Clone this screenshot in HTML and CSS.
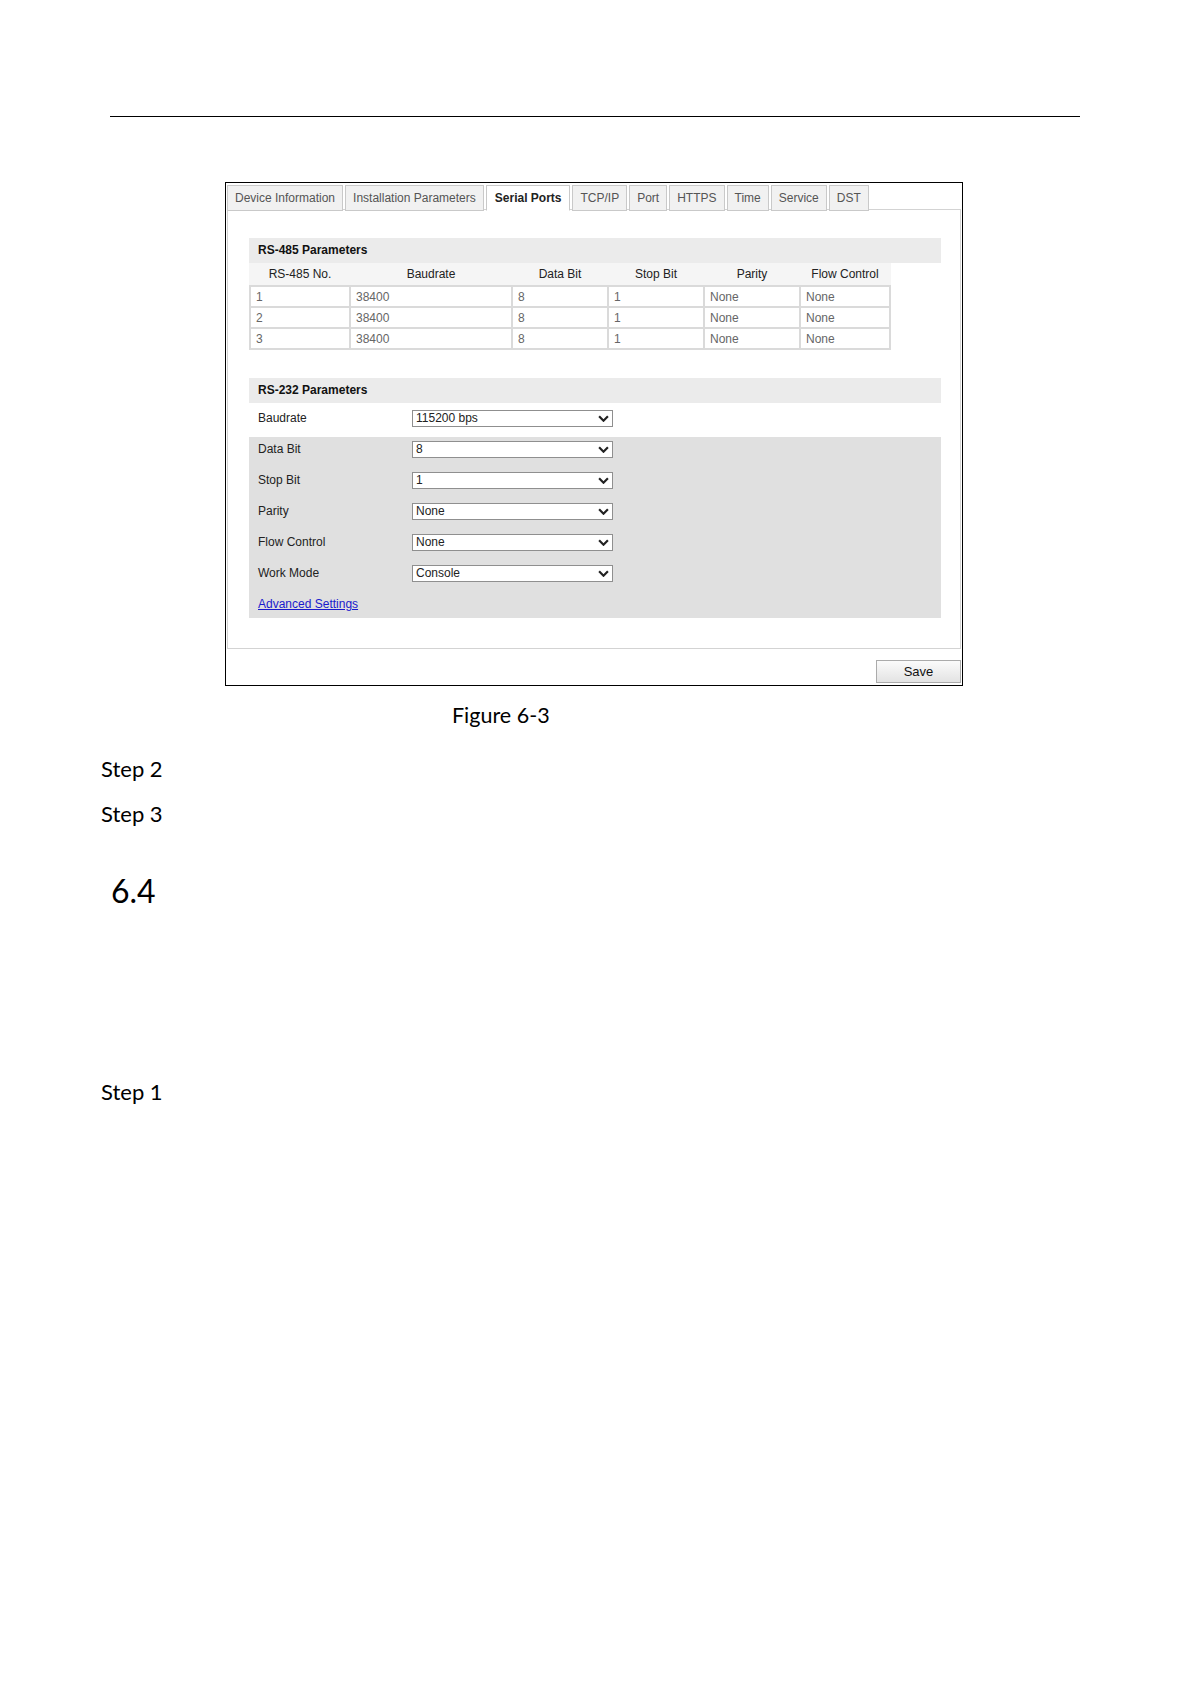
FILE: index.html
```html
<!DOCTYPE html>
<html>
<head>
<meta charset="utf-8">
<link rel="stylesheet" href="styles.css">
</head>
<body>
<div class="page">
  <div class="rule"></div>

  <div class="shot">
    <div class="tabs">
      <div class="tab">Device Information</div>
      <div class="tab">Installation Parameters</div>
      <div class="tab active">Serial Ports</div>
      <div class="tab">TCP/IP</div>
      <div class="tab">Port</div>
      <div class="tab">HTTPS</div>
      <div class="tab">Time</div>
      <div class="tab">Service</div>
      <div class="tab">DST</div>
    </div>
    <div class="panel">
      <div class="sec-head">RS-485 Parameters</div>
      <div class="grid485 head">
        <div>RS-485 No.</div><div>Baudrate</div><div>Data Bit</div><div>Stop Bit</div><div>Parity</div><div>Flow Control</div>
      </div>
      <div class="grid485 body">
        <div>1</div><div>38400</div><div>8</div><div>1</div><div>None</div><div>None</div>
        <div>2</div><div>38400</div><div>8</div><div>1</div><div>None</div><div>None</div>
        <div>3</div><div>38400</div><div>8</div><div>1</div><div>None</div><div>None</div>
      </div>

      <div class="sec-head sec232">RS-232 Parameters</div>
      <div class="row first">
        <div class="lbl">Baudrate</div>
        <div class="sel"><span>115200 bps</span><svg viewBox="0 0 10 6" class="chev"><path d="M1 1 L5 5 L9 1" fill="none" stroke="#222" stroke-width="2"/></svg></div>
      </div>
      <div class="grayblock">
        <div class="row">
          <div class="lbl">Data Bit</div>
          <div class="sel"><span>8</span><svg viewBox="0 0 10 6" class="chev"><path d="M1 1 L5 5 L9 1" fill="none" stroke="#222" stroke-width="2"/></svg></div>
        </div>
        <div class="row">
          <div class="lbl">Stop Bit</div>
          <div class="sel"><span>1</span><svg viewBox="0 0 10 6" class="chev"><path d="M1 1 L5 5 L9 1" fill="none" stroke="#222" stroke-width="2"/></svg></div>
        </div>
        <div class="row">
          <div class="lbl">Parity</div>
          <div class="sel"><span>None</span><svg viewBox="0 0 10 6" class="chev"><path d="M1 1 L5 5 L9 1" fill="none" stroke="#222" stroke-width="2"/></svg></div>
        </div>
        <div class="row">
          <div class="lbl">Flow Control</div>
          <div class="sel"><span>None</span><svg viewBox="0 0 10 6" class="chev"><path d="M1 1 L5 5 L9 1" fill="none" stroke="#222" stroke-width="2"/></svg></div>
        </div>
        <div class="row">
          <div class="lbl">Work Mode</div>
          <div class="sel"><span>Console</span><svg viewBox="0 0 10 6" class="chev"><path d="M1 1 L5 5 L9 1" fill="none" stroke="#222" stroke-width="2"/></svg></div>
        </div>
        <div class="adv"><a href="#">Advanced Settings</a></div>
      </div>
    </div>
    <div class="footer">
      <div class="btn">Save</div>
    </div>
  </div>

  <div class="caption">Figure 6-3</div>
  <div class="step s2">Step 2</div>
  <div class="step s3">Step 3</div>
  <div class="heading">6.4</div>
  <div class="step s1">Step 1</div>
</div>
</body>
</html>
```

FILE: styles.css
```css
html, body {
  margin: 0;
  padding: 0;
  background: #fff;
}
.page {
  width: 1190px;
  height: 1684px;
  position: relative;
  font-family: Lato, "Noto Sans", sans-serif;
  color: #000;
  padding-top: 116px;
  box-sizing: border-box;
}
.rule {
  margin-left: 110px;
  width: 970px;
  border-top: 1px solid #000;
}
.shot {
  margin-left: 225px;
  margin-top: 65px;
  width: 738px;
  box-sizing: border-box;
  border: 1px solid #000;
  padding: 2px 1px 0 1px;
  font-family: "Liberation Sans", Arial, sans-serif;
  font-size: 12px;
  color: #333;
}
.tabs {
  display: flex;
  gap: 2px;
  height: 25px;
  position: relative;
  z-index: 1;
  margin-bottom: -1px;
}
.tab {
  height: 26px;
  box-sizing: border-box;
  padding: 0 7px;
  line-height: 24px;
  border: 1px solid #c9c9c9;
  background: #f1f1f1;
  color: #555;
  white-space: nowrap;
}
.tab.active {
  background: #fff;
  border-bottom-color: #fff;
  font-weight: bold;
  color: #222;
  padding: 0 8px;
}
.panel {
  width: 734px;
  box-sizing: border-box;
  border: 1px solid #d3d3d3;
  padding: 28px 19px 30px 21px;
}
.sec-head {
  height: 25px;
  line-height: 25px;
  background: #ebebeb;
  padding-left: 9px;
  font-weight: bold;
  color: #111;
}
.sec232 {
  margin-top: 28px;
}
.grid485 {
  display: grid;
  grid-template-columns: 98px 160px 94px 94px 94px 88px;
  gap: 2px;
  width: 642px;
  box-sizing: border-box;
  padding: 0 2px;
}
.grid485.head {
  background: #f5f5f5;
  height: 22px;
  line-height: 23px;
  text-align: center;
  color: #222;
}
.grid485.body {
  background: #dadada;
  padding: 2px;
}
.grid485.body div {
  background: #fff;
  height: 19px;
  line-height: 20px;
  padding-left: 5px;
  color: #666;
}
.row {
  display: flex;
  height: 31px;
  box-sizing: border-box;
  padding-top: 4px;
}
.row.first {
  height: 34px;
  padding-top: 7px;
}
.lbl {
  width: 154px;
  padding-left: 9px;
  line-height: 17px;
  color: #222;
}
.sel {
  width: 201px;
  height: 17px;
  box-sizing: border-box;
  border: 1px solid #8f8f8f;
  background: #fff;
  display: flex;
  align-items: center;
  justify-content: space-between;
  padding: 0 3px 0 3px;
  color: #222;
  line-height: 15px;
}
.chev {
  width: 11px;
  height: 7px;
}
.grayblock {
  background: #e0e0e0;
}
.adv {
  height: 26px;
  line-height: 24px;
  padding-left: 9px;
}
.adv a {
  color: #1a1acc;
  text-decoration: underline;
}
.footer {
  height: 36px;
  display: flex;
  justify-content: flex-end;
  padding-top: 11px;
  box-sizing: border-box;
}
.btn {
  width: 85px;
  height: 23px;
  box-sizing: border-box;
  border: 1px solid #ababab;
  background: linear-gradient(#fbfbfb, #e3e3e3);
  text-align: center;
  line-height: 21px;
  font-size: 13px;
  color: #111;
}
.caption {
  margin-left: 452px;
  margin-top: 16px;
  font-size: 21.5px;
  line-height: 26px;
}
.step {
  margin-left: 101px;
  font-size: 22px;
  line-height: 26px;
}
.s2 { margin-top: 28px; }
.s3 { margin-top: 19px; }
.heading {
  margin-left: 111px;
  margin-top: 45px;
  font-size: 32px;
  line-height: 38px;
}
.s1 { margin-top: 169px; }
```
